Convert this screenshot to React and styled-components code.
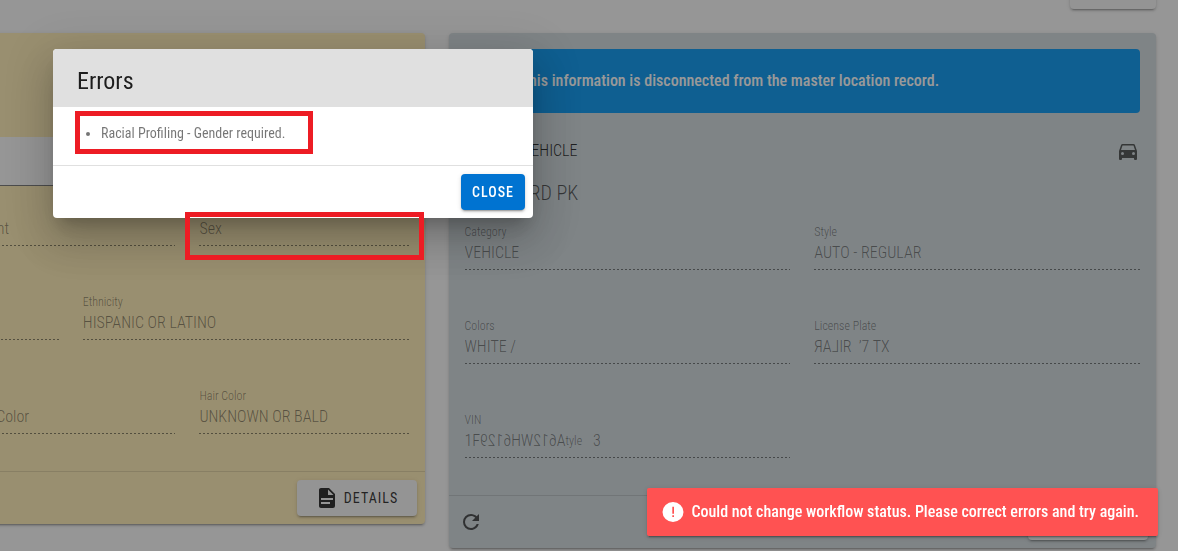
import React, { useId } from "react";
import styled, { createGlobalStyle, css } from "styled-components";

const Global = createGlobalStyle`
  *, *::before, *::after { box-sizing: border-box; }
  html, body { margin: 0; }
  body {
    background: #fafafa;
    color: rgba(0, 0, 0, 0.87);
    font-family: "Roboto Condensed", "Liberation Sans Narrow", Roboto, sans-serif;
    font-size: 16px;
    font-weight: 300;
    line-height: 24px;
    overflow: hidden;
  }
  button, input { font: inherit; color: inherit; }
  h1, h2, h3, p, ul { margin: 0; font-weight: inherit; }
`;

const elevation = css`
  box-shadow: 0 3px 1px -2px rgba(0, 0, 0, 0.2), 0 2px 2px 0 rgba(0, 0, 0, 0.14),
    0 1px 5px 0 rgba(0, 0, 0, 0.12);
`;

const Page = styled.main`
  min-height: 100vh;
  overflow: hidden;
  padding: 0 22px 0 0;
`;

const Toolbar = styled.div`
  display: flex;
  justify-content: flex-end;
  margin: -27px 0 24px;
`;

const Button = styled.button`
  ${elevation}
  display: inline-flex;
  align-items: center;
  justify-content: center;
  gap: 5px;
  height: 36px;
  min-width: ${(p) => p.$width || 64}px;
  padding: 0 10px;
  border: 0;
  border-radius: 4px;
  background: ${(p) => (p.$primary ? "#0073d1" : "#f5f5f5")};
  color: ${(p) => (p.$primary ? "#fff" : "rgba(0, 0, 0, 0.87)")};
  font-size: 14px;
  font-weight: ${(p) => (p.$primary ? 500 : 400)};
  letter-spacing: 1px;
  text-transform: uppercase;
`;

const Columns = styled.div`
  display: flex;
  align-items: flex-start;
  justify-content: flex-end;
  gap: 24px;
`;

const Card = styled.section`
  ${elevation}
  flex: 0 0 61.2%;
  border-radius: 4px;
  background: ${(p) => p.$color};
`;

const PersonHeader = styled.div`
  height: 104px;
`;

const FilterBar = styled.div`
  height: 49px;
  background: #fafafa;
  border-bottom: 1px solid rgba(0, 0, 0, 0.54);
`;

const CardBody = styled.div`
  padding: ${(p) => (p.$tight ? 14 : 16)}px 16px 37px;
`;

const CardActions = styled.div`
  display: flex;
  align-items: center;
  justify-content: space-between;
  padding: 8px;
  border-top: 1px solid rgba(0, 0, 0, 0.12);
`;

const IconButton = styled.button`
  display: inline-flex;
  padding: 2px;
  border: 0;
  background: none;
  color: rgba(0, 0, 0, 0.7);
`;

const Alert = styled.div`
  display: flex;
  align-items: center;
  gap: 16px;
  height: 64px;
  padding: 0 16px;
  border-radius: 4px;
  background: #0094f0;
  color: #fff;
  font-weight: 500;
`;

const VehicleHeading = styled.div`
  display: flex;
  align-items: center;
  justify-content: space-between;
  height: 28px;
  margin-top: 24px;
  svg { color: rgba(0, 0, 0, 0.66); }
`;

const Kind = styled.h2`
  font-size: 16px;
`;

const Model = styled.h3`
  margin: 12px 0 15px;
  color: rgba(0, 0, 0, 0.66);
  font-size: 20px;
  line-height: 32px;
`;

const Rows = styled.div`
  display: grid;
  row-gap: 48px;
`;

const Row = styled.div`
  display: grid;
  grid-template-columns: repeat(${(p) => p.$cols}, minmax(0, 1fr));
  column-gap: 24px;
`;

const FieldBox = styled.div`
  grid-column: ${(p) => p.$column || "auto"};
  display: flex;
  flex-direction: column;
  height: 46px;
  color: rgba(0, 0, 0, 0.48);
  background: repeating-linear-gradient(
      to right,
      rgba(0, 0, 0, 0.5) 0 2px,
      transparent 2px 4px
    )
    left bottom / 100% 1px no-repeat;
`;

const FieldLabel = styled.label`
  font-size: ${(p) => (p.$resting ? 16 : 12)}px;
  line-height: ${(p) => (p.$resting ? 24 : 16)}px;
  margin-top: ${(p) => (p.$resting ? 17 : 0)}px;
  margin-bottom: 1px;
`;

const FieldInput = styled.input`
  width: 100%;
  height: ${(p) => (p.$resting ? 0 : 24)}px;
  padding: 0;
  border: 0;
  background: transparent;
  line-height: 24px;
`;

const FieldOutput = styled.output`
  display: flex;
  align-items: center;
  height: 24px;
  white-space: pre;
`;

const Mirrored = styled.span`
  transform: scaleX(-1);
`;

const Small = styled.span`
  font-size: 12px;
`;

const Scrim = styled.div`
  position: fixed;
  inset: 0;
  background: rgba(33, 33, 33, 0.46);
`;

const Dialog = styled.div`
  position: fixed;
  left: 53px;
  top: 49px;
  width: 480px;
  overflow: hidden;
  border-radius: 4px;
  background: #fff;
  box-shadow: 0 11px 15px -7px rgba(0, 0, 0, 0.2), 0 24px 38px 3px rgba(0, 0, 0, 0.14),
    0 9px 46px 8px rgba(0, 0, 0, 0.12);
`;

const DialogTitle = styled.h1`
  padding: 16px 24px 10px;
  background: #e0e0e0;
  font-size: 24px;
  font-weight: 400;
  line-height: 32px;
`;

const ErrorList = styled.ul`
  padding: 15px 24px 21px 48px;
  color: rgba(0, 0, 0, 0.54);
  font-size: 14px;
  font-weight: 400;
  line-height: 22px;
`;

const DialogActions = styled.div`
  display: flex;
  justify-content: flex-end;
  padding: 8px;
  border-top: 1px solid rgba(0, 0, 0, 0.12);
`;

const Snackbar = styled.div`
  ${elevation}
  position: fixed;
  right: 20px;
  bottom: 15px;
  display: flex;
  align-items: center;
  gap: 6px;
  height: 48px;
  padding: 0 19px 0 14px;
  border-radius: 2px;
  background: #ff5252;
  color: #fff;
  font-weight: 500;
`;

const Highlight = styled.div`
  position: fixed;
  left: ${(p) => p.$x}px;
  top: ${(p) => p.$y}px;
  width: ${(p) => p.$w}px;
  height: ${(p) => p.$h}px;
  border: 5px solid #ed1c24;
  pointer-events: none;
`;

const paths = {
  file: "M13,9H18.5L13,3.5V9M6,2H14L20,8V20A2,2 0 0,1 18,22H6C4.89,22 4,21.1 4,20V4C4,2.89 4.89,2 6,2M15,18V16H6V18H15M18,14V12H6V14H18Z",
  refresh:
    "M17.65,6.35C16.2,4.9 14.21,4 12,4A8,8 0 0,0 4,12A8,8 0 0,0 12,20C15.73,20 18.84,17.45 19.73,14H17.65C16.83,16.33 14.61,18 12,18A6,6 0 0,1 6,12A6,6 0 0,1 12,6C13.66,6 15.14,6.69 16.22,7.78L13,11H20V4L17.65,6.35Z",
  car: "M5,11L6.5,6.5H17.5L19,11M17.5,16A1.5,1.5 0 0,1 16,14.5A1.5,1.5 0 0,1 17.5,13A1.5,1.5 0 0,1 19,14.5A1.5,1.5 0 0,1 17.5,16M6.5,16A1.5,1.5 0 0,1 5,14.5A1.5,1.5 0 0,1 6.5,13A1.5,1.5 0 0,1 8,14.5A1.5,1.5 0 0,1 6.5,16M18.92,6C18.72,5.42 18.16,5 17.5,5H6.5C5.84,5 5.28,5.42 5.08,6L3,12V20A1,1 0 0,0 4,21H5A1,1 0 0,0 6,20V19H18V20A1,1 0 0,0 19,21H20A1,1 0 0,0 21,20V12L18.92,6Z",
  alert:
    "M12 2A10.5 10 0 0 0 12 22A10.5 10 0 0 0 12 2M11.3 6.7H13V13.7H11.3V6.7M11.3 15.3H13V17.1H11.3V15.3Z",
};

function Icon({ name }) {
  return (
    <svg width="24" height="24" viewBox="0 0 24 24" fill="currentColor" aria-hidden="true">
      <path fillRule={name === "alert" ? "evenodd" : "nonzero"} d={paths[name]} />
    </svg>
  );
}

function Field({ label, value, column, children }) {
  const id = useId();
  const resting = !value && !children;
  return (
    <FieldBox $column={column}>
      <FieldLabel htmlFor={id} $resting={resting}>
        {label}
      </FieldLabel>
      {children ? (
        <FieldOutput id={id}>{children}</FieldOutput>
      ) : (
        <FieldInput id={id} $resting={resting} defaultValue={value} disabled />
      )}
    </FieldBox>
  );
}

export default function App() {
  return (
    <>
      <Global />
      <Page>
        <Toolbar>
          <Button $width={86} aria-label="Actions" />
        </Toolbar>
        <Columns>
          <Card $color="#ffecb3">
            <PersonHeader />
            <FilterBar />
            <CardBody $tight>
              <Rows>
                <Row $cols={3}>
                  <Field label="Weight" column={2} />
                  <Field label="Sex" />
                </Row>
                <Row $cols={2}>
                  <FieldBox />
                  <Field label="Ethnicity" value="HISPANIC OR LATINO" />
                </Row>
                <Row $cols={3}>
                  <Field label="Skin Color" column={2} />
                  <Field label="Hair Color" value="UNKNOWN OR BALD" />
                </Row>
              </Rows>
            </CardBody>
            <CardActions>
              <span />
              <Button $width={120}>
                <Icon name="file" />
                Details
              </Button>
            </CardActions>
          </Card>

          <Card $color="#cfd8dc">
            <CardBody>
              <Alert>
                <Icon name="alert" />
                This information is disconnected from the master location record.
              </Alert>
              <VehicleHeading>
                <Kind>TRAFFIC VEHICLE</Kind>
                <Icon name="car" />
              </VehicleHeading>
              <Model>2019 FORD PK</Model>
              <Rows>
                <Row $cols={2}>
                  <Field label="Category" value="VEHICLE" />
                  <Field label="Style" value="AUTO - REGULAR" />
                </Row>
                <Row $cols={2}>
                  <Field label="Colors" value="WHITE /" />
                  <Field label="License Plate">
                    <Mirrored>LAR</Mirrored>
                    {"lR  ’7 TX"}
                  </Field>
                </Row>
                <Row $cols={2}>
                  <Field label="VIN">
                    1F
                    <Mirrored>A612WH6129</Mirrored>
                    <Small>tyle</Small>
                    {"   3"}
                  </Field>
                </Row>
              </Rows>
            </CardBody>
            <CardActions>
              <IconButton aria-label="Refresh">
                <Icon name="refresh" />
              </IconButton>
              <Button $width={120} aria-label="Vehicle details" />
            </CardActions>
          </Card>
        </Columns>
      </Page>

      <Scrim />
      <Dialog role="dialog" aria-modal="true" aria-labelledby="errors-title">
        <DialogTitle id="errors-title">Errors</DialogTitle>
        <ErrorList>
          <li>Racial Profiling - Gender required.</li>
        </ErrorList>
        <DialogActions>
          <Button $primary>Close</Button>
        </DialogActions>
      </Dialog>

      <Snackbar role="alert">
        <Icon name="alert" />
        Could not change workflow status. Please correct errors and try again.
      </Snackbar>

      <Highlight $x={75} $y={111} $w={238} $h={43} />
      <Highlight $x={185} $y={212} $w={239} $h={48} />
    </>
  );
}
